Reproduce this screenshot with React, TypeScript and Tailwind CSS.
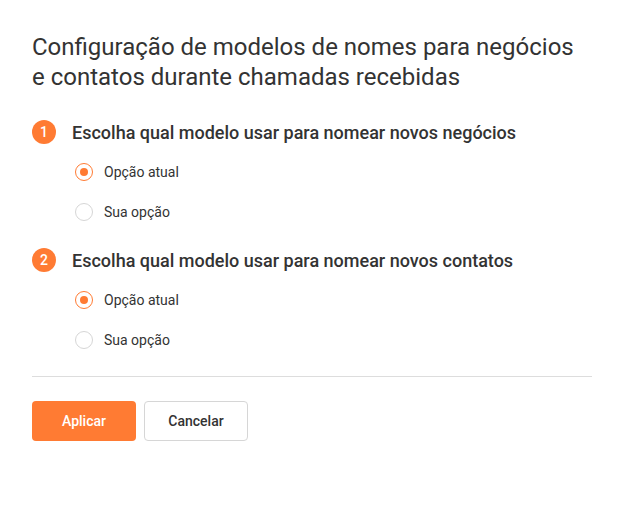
import React, { useState } from 'react';

interface Option {
  id: string;
  label: string;
}

const options: Option[] = [
  { id: 'current', label: 'Opção atual' },
  { id: 'custom', label: 'Sua opção' },
];

const Radio: React.FC<{ checked: boolean; label: string; onSelect: () => void }> = ({ checked, label, onSelect }) => (
  <label className="flex h-10 items-center cursor-pointer" onClick={onSelect}>
    <span
      className={`flex h-[18px] w-[18px] items-center justify-center rounded-full border ${
        checked ? 'border-[#ff7b33]' : 'border-[#d6d6d6]'
      }`}
    >
      {checked && <span className="h-2 w-2 rounded-full bg-[#ff7b33]" />}
    </span>
    <span className="ml-[11px] text-[14px] text-[#333333]">{label}</span>
  </label>
);

const Step: React.FC<{ n: number; title: string }> = ({ n, title }) => {
  const [value, setValue] = useState('current');
  return (
    <div>
      <div className="flex h-6 items-center">
        <span className="flex h-6 w-6 items-center justify-center rounded-full bg-[#ff7b33] text-[14px] font-medium text-white">
          {n}
        </span>
        <span className="ml-4 text-[18px] font-medium text-[#333333]">{title}</span>
      </div>
      <div className="mt-2 pl-[43px]">
        {options.map(o => (
          <Radio key={o.id} checked={value === o.id} label={o.label} onSelect={() => setValue(o.id)} />
        ))}
      </div>
    </div>
  );
};

export default function App() {
  return (
    <div className="min-h-[521px] w-[624px] bg-white px-8 pt-8" style={{ fontFamily: 'Roboto, "Liberation Sans", sans-serif' }}>
      <h1 className="text-[24px] leading-[30px] font-normal text-[#333333]">
        Configuração de modelos de nomes para negócios e contatos durante chamadas recebidas
      </h1>
      <div className="mt-7">
        <Step n={1} title="Escolha qual modelo usar para nomear novos negócios" />
      </div>
      <div className="mt-4">
        <Step n={2} title="Escolha qual modelo usar para nomear novos contatos" />
      </div>
      <div className="mt-4 h-px bg-[#dddddd]" />
      <div className="mt-6 flex gap-2">
        <button className="h-10 w-[104px] rounded bg-[#ff7b33] text-[14px] font-medium text-white">Aplicar</button>
        <button className="h-10 w-[104px] rounded border border-[#d6d6d6] bg-white text-[14px] font-medium text-[#333333]">
          Cancelar
        </button>
      </div>
    </div>
  );
}
